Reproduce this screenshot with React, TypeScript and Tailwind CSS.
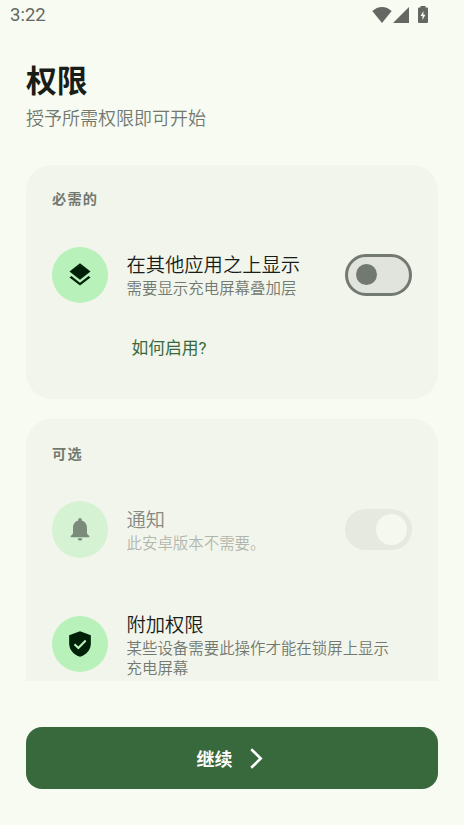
import React from "react";
import { MdLayers, MdNotifications } from "react-icons/md";

type SwitchProps = { disabled?: boolean };

function StatusBar() {
  return (
    <div className="h-[31px] shrink-0 pl-[10px] pr-[36px] flex items-center justify-between text-[#646762]">
      <span className="font-[Roboto] text-[18.500px] leading-[31px] font-normal">3:22</span>
      <div className="flex items-center pb-[2px]">
        <svg className="w-5 h-4" viewBox="0 0 20 16" fill="currentColor">
          <path d="M10 16L.3 4.1C3 1.6 6.400 0 10 0s7 1.600 9.700 4.100z" />
        </svg>
        <svg className="w-4 h-4 ml-[1px]" viewBox="0 0 16 16" fill="currentColor">
          <path d="M0 16L16 0v16z" />
        </svg>
        <svg className="w-[10px] h-[17px] ml-[9px]" viewBox="0 0 10 17" fill="currentColor">
          <path fillRule="evenodd" d="M2.500 0h5v1.500H9q1 0 1 1V16q0 1-1 1H1q-1 0-1-1V2.500q0-1 1-1h1.500zM5.400 5L2.600 10h1.900v4l2.900-5.200H5.400z" />
        </svg>
      </div>
    </div>
  );
}

function ShieldCheck() {
  return (
    <svg className="w-[28px] h-[28px]" viewBox="0 0 24 24" fill="currentColor">
      <path d="M12 1L2.700 4.400v7.200C2.700 17 6.700 21.500 12 23c5.300-1.500 9.300-6 9.300-11.400V4.400z" />
      <path d="M7.300 12.200l3.300 3.300 6.300-6.500" fill="none" stroke="#b8f1b9" strokeWidth="1.800" />
    </svg>
  );
}

function Switch({ disabled }: SwitchProps) {
  if (disabled) {
    return (
      <div className="w-[67px] h-[41px] shrink-0 rounded-full bg-[#e5e9e0] flex items-center justify-end pr-[5px]">
        <div className="w-[31px] h-[31px] rounded-full bg-[#f5f8ef]" />
      </div>
    );
  }
  return (
    <div className="w-[67px] h-[42px] shrink-0 rounded-full border-[3px] border-[#727970] bg-[#e1e4dc] flex items-center pl-[7.500px]">
      <div className="w-[21px] h-[21px] rounded-full bg-[#727970]" />
    </div>
  );
}

export default function App() {
  return (
    <div
      lang="zh-CN"
      className="w-full h-[825px] overflow-hidden flex flex-col bg-[#f8fbf2] text-[#191d18] font-['Noto_Sans_CJK_SC',sans-serif] font-[350]"
    >
      <StatusBar />

      <header className="px-[26px] pt-[26px] shrink-0">
        <h1 className="text-[30.800px] leading-[44px] font-bold">权限</h1>
        <p className="mt-[2px] text-[18px] leading-[28px] text-[#727970]">授予所需权限即可开始</p>
      </header>

      <main className="mt-[34px] mx-[26px] h-[516px] shrink-0 overflow-hidden flex flex-col gap-5">
        <section className="h-[234px] shrink-0 rounded-[26px] bg-[#f2f5ec] pl-[25.500px] pr-[26px] pt-[23px]">
          <h2 className="pl-[.5px] text-[14.200px] leading-[20px] tracking-[1.200px] font-bold text-[#727970]">必需的</h2>
          <div className="mt-[38.500px] flex items-center">
            <div className="w-[56.500px] h-[56.500px] shrink-0 rounded-full bg-[#b8f1b9] text-[#002107] flex items-center justify-center">
              <MdLayers size={28} />
            </div>
            <div className="ml-[18.500px] flex-1 pt-[1px]">
              <h3 className="text-[19.300px] leading-[25px]">在其他应用之上显示</h3>
              <p className="text-[15.450px] leading-[21px] text-[#727970]">需要显示充电屏幕叠加层</p>
            </div>
            <Switch />
          </div>
          <button className="ml-[80px] mt-[33px] block text-[16.750px] leading-[24px] font-normal text-[#38693d] font-[Roboto,'Noto_Sans_CJK_SC',sans-serif]">如何启用?</button>
        </section>

        <section className="h-[300px] shrink-0 rounded-t-[26px] bg-[#f2f5ec] pl-[25.500px] pr-[26px] pt-6">
          <h2 className="pl-[.5px] text-[14.200px] leading-[20px] tracking-[1.200px] font-bold text-[#727970]">可选</h2>
          <div className="mt-[38px] flex items-center">
            <div className="w-[56.500px] h-[56.500px] shrink-0 rounded-full bg-[#d5f3d3] text-[#7a8b7a] flex items-center justify-center">
              <MdNotifications size={28} />
            </div>
            <div className="ml-[18.500px] flex-1">
              <h3 className="text-[19.300px] leading-[26px] text-[#868982]">通知</h3>
              <p className="text-[15.450px] leading-[20px] text-[#b2b7ae]">此安卓版本不需要。</p>
            </div>
            <Switch disabled />
          </div>
          <div className="mt-[53.500px] flex items-center">
            <div className="w-[56.500px] h-[56.500px] shrink-0 rounded-full bg-[#b8f1b9] text-[#002107] flex items-center justify-center">
              <ShieldCheck />
            </div>
            <div className="ml-[18.500px] w-[270px]">
              <h3 className="text-[19.300px] leading-[27px]">附加权限</h3>
              <p className="text-[15.450px] leading-[19.500px] text-[#727970]">某些设备需要此操作才能在锁屏上显示充电屏幕</p>
            </div>
          </div>
        </section>
      </main>

      <button className="mt-[46px] mx-[26px] h-[62px] shrink-0 rounded-[16px] bg-[#38693d] text-white flex items-center justify-center">
        <span className="text-[18px] leading-[26px] font-bold pb-[1px]">继续</span>
        <svg className="ml-[17px] w-[13px] h-[21px] mr-[5px]" viewBox="0 0 13 21" fill="none" stroke="currentColor" strokeWidth="2.600">
          <path d="M1.200 1.200l9.500 9.300-9.500 9.300" />
        </svg>
      </button>
    </div>
  );
}
